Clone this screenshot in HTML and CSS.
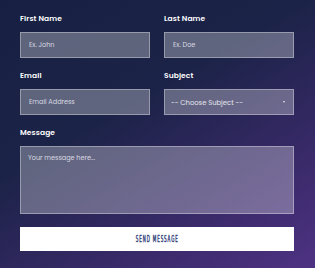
FILE: index.html
```html
<!DOCTYPE html>
<html lang="en">
<head>
  <meta charset="UTF-8">
  <meta name="viewport" content="width=device-width, initial-scale=1.0">
  <title>Contact</title>
  <link rel="stylesheet" href="styles.css">
</head>
<body>
<form class="contact-form">
  <div class="field">
    <label for="firstName">First Name</label>
    <input type="text" id="firstName" placeholder="Ex. John">
  </div>
  <div class="field">
    <label for="lastName">Last Name</label>
    <input type="text" id="lastName" placeholder="Ex. Doe">
  </div>
  <div class="field">
    <label for="email">Email</label>
    <input type="email" id="email" placeholder="Email Address">
  </div>
  <div class="field">
    <label for="subject">Subject</label>
    <div class="select-wrap">
      <select id="subject">
        <option>-- Choose Subject --</option>
      </select>
      <span class="caret"></span>
    </div>
  </div>
  <div class="field wide">
    <label for="message">Message</label>
    <textarea id="message" placeholder="Your message here..."></textarea>
  </div>
  <button type="submit" class="send-btn wide"><span>Send Message</span></button>
</form>
</body>
</html>
```

FILE: styles.css
```css
html, body { height: 100%; }
body {
  margin: 0;
  background: linear-gradient(150deg, #172042 0%, #1c2348 40%, #3a2a6a 75%, #4e3283 100%);
  font-family: "Poppins", Lato, "Noto Sans", sans-serif;
  color: #fff;
}
.contact-form {
  display: grid;
  grid-template-columns: 130px 130px;
  column-gap: 14px;
  width: 274px;
  padding: 13px 0 0 20px;
}
.wide { grid-column: 1 / 3; }
.field {
  display: flex;
  flex-direction: column;
  margin-bottom: 12px;
}
label {
  font-size: 7.5px;
  font-weight: 600;
  line-height: 12px;
  margin-bottom: 7px;
  letter-spacing: 0.1px;
}
input, select, textarea {
  display: block;
  box-sizing: border-box;
  width: 100%;
  height: 26px;
  margin: 0;
  padding: 0 8px;
  background: rgba(255, 255, 255, 0.3);
  border: 1px solid rgba(255, 255, 255, 0.35);
  border-radius: 0;
  color: #e6e6ee;
  font-family: inherit;
  font-size: 6.5px;
  outline: none;
}
input::placeholder, textarea::placeholder { color: #d8d9e2; }
.select-wrap { position: relative; }
select {
  -webkit-appearance: none;
  appearance: none;
  padding-left: 6px;
  font-size: 6.8px;
}
.caret {
  position: absolute;
  right: 9px;
  top: 12px;
  border-left: 1.5px solid transparent;
  border-right: 1.5px solid transparent;
  border-top: 2px solid #e6e6ee;
}
textarea {
  height: 68px;
  padding: 6px 7px;
  resize: none;
}
.field.wide { margin-bottom: 13px; }
.send-btn {
  height: 24px;
  border: none;
  background: #fff;
  color: #34457a;
  font-family: "DejaVu Sans Condensed", "DejaVu Sans", sans-serif;
  font-weight: 400;
  font-size: 8px;
  letter-spacing: 1.6px;
  text-transform: uppercase;
  cursor: pointer;
}
.send-btn span {
  display: inline-block;
  transform: scaleX(0.56);
  -webkit-text-stroke: 0.45px #34457a;
}
```
